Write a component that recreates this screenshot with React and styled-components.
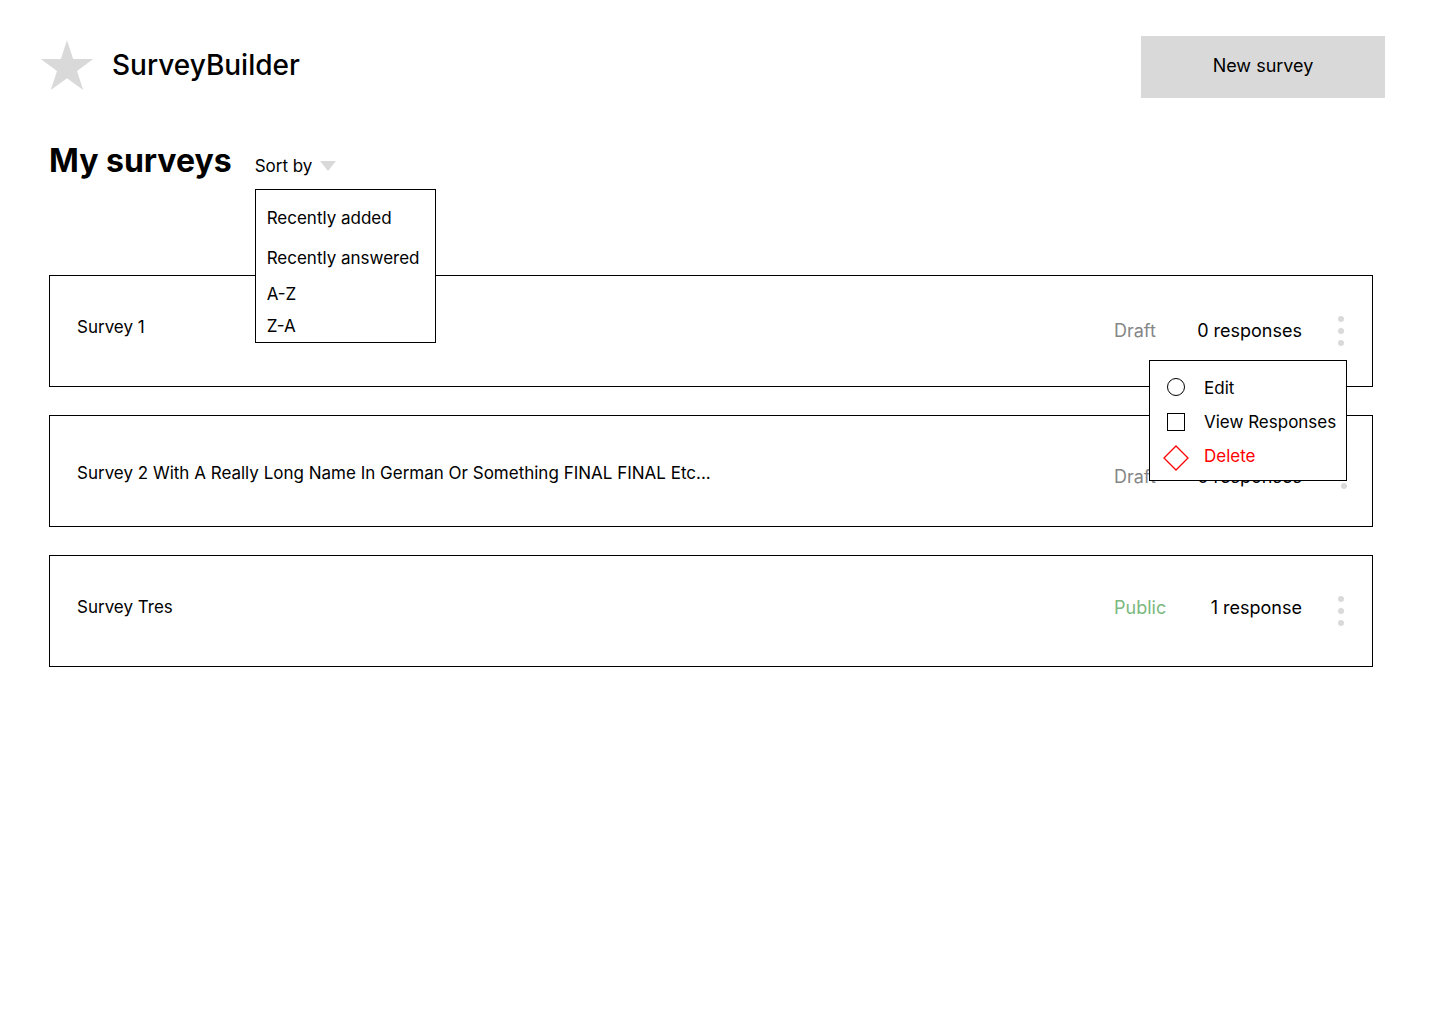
import React, { useState } from "react";
import styled, { createGlobalStyle, css } from "styled-components";

const GlobalStyle = createGlobalStyle`
  *, *::before, *::after { box-sizing: border-box; }
  body {
    margin: 0;
    background: #fff;
    color: #000;
    font-family: Inter, "Liberation Sans", sans-serif;
    font-size: 17px;
    line-height: 20px;
  }
  button { font: inherit; color: inherit; background: none; border: 0; padding: 0; cursor: pointer; }
  h1, h2, p, ul { margin: 0; padding: 0; }
  ul { list-style: none; }
`;

const Header = styled.header`
  display: flex;
  align-items: flex-start;
  justify-content: space-between;
  padding: 36px 55px 0 40px;
`;

const Brand = styled.a`
  display: flex;
  align-items: center;
  gap: 18px;
  height: 58px;
  color: inherit;
  text-decoration: none;
  font-size: 28px;
  line-height: 34px;
  font-weight: 500;
`;

const StarIcon = styled.svg`
  display: block;
  width: 54px;
  height: 54px;
  fill: #d9d9d9;
`;

const NewSurveyButton = styled.button`
  width: 244px;
  height: 62px;
  padding-bottom: 2px;
  background: #d9d9d9;
  font-size: 18px;
`;

const Main = styled.main`
  padding: 43px 67px 48px 49px;
`;

const TitleRow = styled.div`
  display: flex;
  align-items: flex-end;
  gap: 23px;
  margin-bottom: 94px;
`;

const Title = styled.h1`
  font-size: 32px;
  line-height: 40px;
  font-weight: 700;
`;

const SortControl = styled.div`
  position: relative;
  padding-bottom: 5px;
`;

const SortButton = styled.button`
  display: flex;
  align-items: center;
  gap: 8px;
`;

const Caret = styled.svg`
  width: 16px;
  height: 10px;
  fill: #d9d9d9;
`;

const Menu = styled.ul`
  position: absolute;
  z-index: 2;
  background: #fff;
  border: 1px solid #000;
`;

const SortMenu = styled(Menu)`
  top: calc(100% + 8px);
  left: 0;
  width: 181px;
  padding-top: 8px;
`;

const SortOption = styled.button`
  display: block;
  width: 100%;
  height: ${({ $tall }) => ($tall ? "40px" : "32px")};
  padding: 0 11px;
  text-align: left;
  white-space: nowrap;
`;

const SurveyList = styled.ul`
  display: flex;
  flex-direction: column;
  gap: 28px;
`;

const Card = styled.li`
  display: flex;
  align-items: center;
  height: 112px;
  padding: 0 25px 0 27px;
  border: 1px solid #000;
  ${({ $roomy }) => $roomy && css`padding: 6px 22px 0 27px;`}
`;

const SurveyName = styled.h2`
  flex: 1;
  min-width: 0;
  align-self: flex-start;
  margin-top: 41px;
  overflow: hidden;
  text-overflow: ellipsis;
  white-space: nowrap;
  font-size: 17px;
  font-weight: 400;
`;

const Summary = styled.div`
  display: flex;
  justify-content: space-between;
  align-self: flex-start;
  width: 188px;
  margin-top: ${({ $raised }) => ($raised ? "42px" : "45px")};
  margin-right: ${({ $roomy }) => ($roomy ? "36px" : "33px")};
  font-size: 18px;
`;

const Status = styled.span`
  color: ${({ $public }) => ($public ? "#7bb97e" : "#868686")};
`;

const ActionControl = styled.div`
  position: relative;
`;

const DotsButton = styled.button`
  display: block;
  width: 12px;
  height: 30px;
`;

const DotsIcon = styled.svg`
  display: block;
  width: 12px;
  height: 30px;
  fill: #d9d9d9;
`;

const ActionMenu = styled(Menu)`
  top: calc(100% + 14px);
  right: 0;
  width: 198px;
  padding: 10px 0 7px;
`;

const ActionItem = styled.button`
  display: flex;
  align-items: center;
  gap: 14px;
  width: 100%;
  height: 34px;
  padding-left: 13px;
  white-space: nowrap;
  color: ${({ $danger }) => ($danger ? "#f00" : "#000")};
`;

const ActionIcon = styled.svg`
  flex: none;
  width: 27px;
  height: 30px;
  fill: none;
  stroke: currentColor;
`;

const sortOptions = [
  { label: "Recently added", tall: true },
  { label: "Recently answered", tall: true },
  { label: "A-Z" },
  { label: "Z-A" },
];

const surveys = [
  { id: 1, name: "Survey 1", status: "Draft", responses: "0 responses" },
  {
    id: 2,
    name: "Survey 2 With A Really Long Name In German Or Something FINAL FINAL Etc...",
    status: "Draft",
    responses: "0 responses",
    roomy: true,
  },
  { id: 3, name: "Survey Tres", status: "Public", responses: "1 response" },
];

const actions = [
  { label: "Edit", icon: <circle cx="13" cy="14" r="8.5" /> },
  { label: "View Responses", icon: <rect x="4.5" y="6.5" width="17" height="17" /> },
  { label: "Delete", icon: <path strokeWidth="1.3" d="M13 5 25 17 13 29 1 17Z" />, danger: true },
];

function SortBy() {
  const [open, setOpen] = useState(true);
  return (
    <SortControl>
      <SortButton type="button" aria-expanded={open} onClick={() => setOpen(!open)}>
        Sort by
        <Caret viewBox="0 0 16 10" aria-hidden="true">
          <path d="M0 0H16L8 10Z" />
        </Caret>
      </SortButton>
      {open && (
        <SortMenu>
          {sortOptions.map(({ label, tall }) => (
            <li key={label}>
              <SortOption type="button" $tall={tall} onClick={() => setOpen(false)}>{label}</SortOption>
            </li>
          ))}
        </SortMenu>
      )}
    </SortControl>
  );
}

function SurveyCard({ survey, open, onToggle }) {
  const isPublic = survey.status === "Public";
  return (
    <Card $roomy={survey.roomy}>
      <SurveyName>{survey.name}</SurveyName>
      <Summary $raised={isPublic} $roomy={survey.roomy}>
        <Status $public={isPublic}>{survey.status}</Status>
        <span>{survey.responses}</span>
      </Summary>
      <ActionControl>
        <DotsButton type="button" aria-label={`Actions for ${survey.name}`} aria-expanded={open} onClick={onToggle}>
          <DotsIcon viewBox="0 0 12 30" aria-hidden="true">
            <circle cx="6" cy="3" r="3" />
            <circle cx="6" cy="15" r="3" />
            <circle cx="6" cy="27" r="3" />
          </DotsIcon>
        </DotsButton>
        {open && (
          <ActionMenu>
            {actions.map(({ label, icon, danger }) => (
              <li key={label}>
                <ActionItem type="button" $danger={danger}>
                  <ActionIcon viewBox="0 0 27 30" aria-hidden="true">{icon}</ActionIcon>
                  {label}
                </ActionItem>
              </li>
            ))}
          </ActionMenu>
        )}
      </ActionControl>
    </Card>
  );
}

export default function App() {
  const [openId, setOpenId] = useState(1);
  return (
    <>
      <GlobalStyle />
      <Header>
        <Brand href="#">
          <StarIcon viewBox="0 -2 54 54" aria-hidden="true">
            <path d="M27 0 33.1 19.1H53.2L37 30.9 43.2 50 27 38.2 10.8 50 17 30.9.8 19.1H20.9Z" />
          </StarIcon>
          SurveyBuilder
        </Brand>
        <NewSurveyButton type="button">New survey</NewSurveyButton>
      </Header>
      <Main>
        <TitleRow>
          <Title>My surveys</Title>
          <SortBy />
        </TitleRow>
        <SurveyList>
          {surveys.map((survey) => (
            <SurveyCard
              key={survey.id}
              survey={survey}
              open={openId === survey.id}
              onToggle={() => setOpenId(openId === survey.id ? null : survey.id)}
            />
          ))}
        </SurveyList>
      </Main>
    </>
  );
}
